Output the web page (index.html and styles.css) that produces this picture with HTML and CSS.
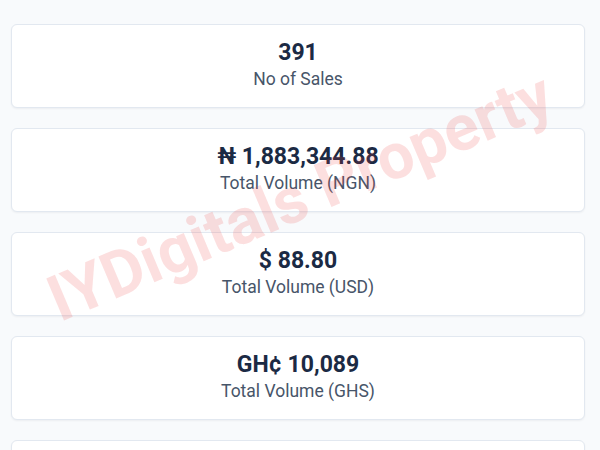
FILE: index.html
```html
<!DOCTYPE html>
<html lang="en">
<head>
  <meta charset="UTF-8">
  <meta name="viewport" content="width=device-width, initial-scale=1.0">
  <title>Sales Summary</title>
  <link rel="stylesheet" href="styles.css">
</head>
<body>

  <div class="stats">

    <!-- Summary cards -->
    <div class="stat-card">
      <div class="stat-value">391</div>
      <div class="stat-label">No of Sales</div>
    </div>

    <div class="stat-card">
      <div class="stat-value">₦ 1,883,344.88</div>
      <div class="stat-label">Total Volume (NGN)</div>
    </div>

    <div class="stat-card">
      <div class="stat-value">$ 88.80</div>
      <div class="stat-label">Total Volume (USD)</div>
    </div>

    <div class="stat-card">
      <div class="stat-value">GH¢ 10,089</div>
      <div class="stat-label">Total Volume (GHS)</div>
    </div>

    <!-- next card starts below the fold -->
    <div class="stat-card"></div>

  </div>

  <div class="watermark">IYDigitals Property</div>

</body>
</html>
```

FILE: styles.css
```css
* {
  margin: 0;
  padding: 0;
  box-sizing: border-box;
  font-family: 'Roboto', 'Liberation Sans', sans-serif;
}

body {
  background-color: #f8fafc;
  color: #1e293b;
  overflow: hidden;
}

.stats {
  display: flex;
  flex-direction: column;
  gap: 20px;
  padding: 24px 15px 24px 11px;
}

.stat-card {
  background-color: #fff;
  border: 1px solid #e2e8f0;
  border-radius: 6px;
  box-shadow: 0 1px 2px rgba(15, 23, 42, 0.05);
  height: 84px;
  padding: 14px 16px;
  text-align: center;
}

.stat-value {
  font-size: 23px;
  line-height: 28px;
  font-weight: 700;
  color: #1b2a44;
}

.stat-label {
  font-size: 17.5px;
  line-height: 24px;
  color: #475569;
}

/* diagonal ownership stamp over the cards */
.watermark {
  position: absolute;
  left: 300px;
  top: 197px;
  transform: translate(-50%, -50%) rotate(-23deg);
  font-size: 64px;
  font-weight: 700;
  color: rgba(239, 68, 68, 0.17);
  white-space: nowrap;
  pointer-events: none;
}
```
